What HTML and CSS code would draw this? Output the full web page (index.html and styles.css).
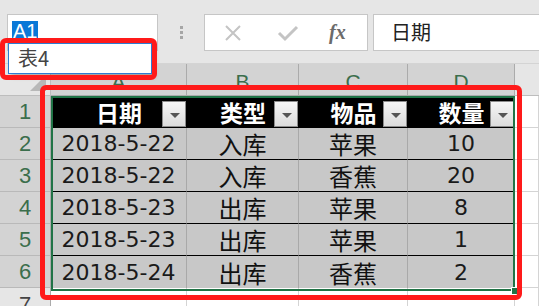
FILE: index.html
```html
<!DOCTYPE html>
<html>
<head>
<meta charset="utf-8">
<link rel="stylesheet" href="styles.css">
</head>
<body>
<div class="app">
  <div class="topbar">
    <div class="namebox"><span class="sel">A1</span></div>
    <div class="dots"><i></i><i></i><i></i></div>
    <div class="fbtns">
      <svg class="ico" width="20" height="20" viewBox="0 0 20 20"><path d="M3 3 L17 17 M17 3 L3 17" stroke="#c4c4c4" stroke-width="2" fill="none"/></svg>
      <svg class="ico" width="22" height="20" viewBox="0 0 22 20"><path d="M2 10 L8 16 L20 4" stroke="#c4c4c4" stroke-width="3" fill="none"/></svg>
      <span class="fx">fx</span>
    </div>
    <div class="finput">日期</div>
  </div>
  <div class="sheet">
    <div class="corner"></div>
    <div class="ch">A</div><div class="ch">B</div><div class="ch">C</div><div class="ch">D</div><div class="ch plain"></div>

    <div class="rh">1</div>
    <div class="th">日期<span class="fb"></span></div>
    <div class="th">类型<span class="fb"></span></div>
    <div class="th">物品<span class="fb"></span></div>
    <div class="th">数量<span class="fb"></span></div>
    <div class="c"></div>

    <div class="rh">2</div><div class="td num">2018-5-22</div><div class="td">入库</div><div class="td">苹果</div><div class="td num">10</div><div class="c"></div>
    <div class="rh">3</div><div class="td num">2018-5-22</div><div class="td">入库</div><div class="td">香蕉</div><div class="td num">20</div><div class="c"></div>
    <div class="rh">4</div><div class="td num">2018-5-23</div><div class="td">出库</div><div class="td">苹果</div><div class="td num">8</div><div class="c"></div>
    <div class="rh">5</div><div class="td num">2018-5-23</div><div class="td">出库</div><div class="td">苹果</div><div class="td num">1</div><div class="c"></div>
    <div class="rh">6</div><div class="td num last">2018-5-24</div><div class="td last">出库</div><div class="td last">香蕉</div><div class="td num last">2</div><div class="c"></div>
    <div class="rh plain">7</div><div class="c"></div><div class="c"></div><div class="c"></div><div class="c"></div><div class="c"></div>
  </div>

  <div class="tableframe"><span class="handle"></span></div>
  <div class="dropdown">表4</div>
  <div class="mark mark1"></div>
  <div class="mark mark2"></div>
</div>
</body>
</html>
```
FILE: styles.css
```css
* { box-sizing: border-box; }
html, body { margin: 0; padding: 0; }
body {
  width: 539px; height: 306px; overflow: hidden;
  background: #e6e6e6;
  font-family: "Noto Sans CJK SC", "Liberation Sans", sans-serif;
}
.app { position: relative; width: 539px; height: 306px; overflow: hidden; }

.topbar {
  height: 64px;
  display: flex;
  align-items: flex-start;
  padding-top: 14px;
  border-bottom: 1px solid #d4d4d4;
}
.namebox {
  margin-left: 7px;
  width: 151px; height: 37px;
  background: #fff;
  border: 1px solid #c6c6c6;
  padding: 4px 0 0 4px;
}
.sel {
  display: inline-block;
  background: #0a78d7; color: #fff;
  font-family: "Liberation Sans", sans-serif;
  font-size: 20px; line-height: 20px;
  padding: 0 1px;
}
.dots {
  width: 46px; height: 37px;
  display: flex; flex-direction: column; align-items: center; justify-content: center; gap: 2px;
}
.dots i { display: block; width: 3px; height: 3px; background: #a6a6a6; }
.fbtns {
  width: 164px; height: 37px;
  background: #fff; border: 1px solid #c6c6c6;
  display: flex; align-items: center;
  padding-left: 18px; gap: 34px;
}
.fx {
  font-family: "Liberation Serif", serif; font-style: italic; font-weight: bold;
  font-size: 20px; color: #6b6b6b; margin-left: -4px;
}
.finput {
  margin-left: 5px; flex: 1; height: 37px;
  background: #fff; border: 1px solid #c6c6c6; border-right: none;
  font-size: 20px; color: #222; line-height: 34px; padding-left: 17px;
}

.sheet {
  display: grid;
  grid-template-columns: 51px 136px 112px 109px 107px 24px;
  grid-template-rows: 32px repeat(6, 32px) 30px;
  background: #fff;
}
.corner {
  background: #e6e6e6; border-right: 1px solid #bdbdbd; border-bottom: 1px solid #bdbdbd;
  position: relative;
}
.corner::after {
  content: ""; position: absolute; right: 4px; bottom: 4px;
  border-left: 16px solid transparent; border-bottom: 16px solid #b8b8b8;
}
.ch {
  background: #d3d3d3; color: #3b6e4c;
  border-right: 1px solid #ababab; border-bottom: 1px solid #ababab;
  font-family: "Liberation Sans", sans-serif; font-size: 21px;
  display: flex; align-items: flex-end; justify-content: center; padding-bottom: 1px;
  line-height: 24px;
}
.ch.plain { background: #e6e6e6; border-right: none; border-bottom-color: #bdbdbd; }
.rh {
  background: #d3d3d3; color: #3b6e4c;
  border-right: 1px solid #ababab; border-bottom: 1px solid #b9b9b9;
  font-family: "Liberation Sans", sans-serif; font-size: 22px;
  display: flex; align-items: center; justify-content: center;
}
.rh.plain { background: #e6e6e6; color: #444; align-items: flex-start; padding-top: 4px; }
.c { background: #fff; border-right: 1px solid #d4d4d4; border-bottom: 1px solid #d4d4d4; }
.th {
  background: #000; color: #fff; font-weight: bold; font-size: 23px;
  position: relative;
  display: flex; align-items: center; justify-content: center;
  border-bottom: 1px solid #000;
}
.fb {
  position: absolute; right: 1px; top: 5px;
  width: 24px; height: 26px;
  background: linear-gradient(#f6f6f6, #dcdcdc);
  border: 1px solid #8c8c8c;
}
.fb::after {
  content: ""; position: absolute; left: 7px; top: 11px;
  border-left: 5px solid transparent; border-right: 5px solid transparent;
  border-top: 5px solid #555;
}
.td {
  background: #c8c8c8; color: #111; font-size: 24px;
  display: flex; align-items: center; justify-content: center;
  border-right: 1px solid #a9a9a9; border-bottom: 1px solid #000;
}
.td.num { font-family: "DejaVu Sans", "Noto Sans CJK SC", sans-serif; font-size: 22px; color: #1a1a1a; }
.td.last { border-bottom: none; }

.tableframe {
  position: absolute; left: 51px; top: 96px; width: 464px; height: 195px;
  border: 2px solid #217346;
}
.handle {
  position: absolute; right: -6px; bottom: -6px; width: 8px; height: 8px;
  background: #217346; border: 1px solid #fff;
}
.dropdown {
  position: absolute; left: 8px; top: 43px; width: 144px; height: 31px;
  background: #fff; border: 1px solid #2b7cd3;
  font-size: 20px; color: #444; line-height: 28px; padding-left: 9px;
  box-shadow: 3px 3px 4px rgba(0,0,0,0.25);
}
.mark {
  position: absolute; border: 5px solid #ff1a1a; border-radius: 6px;
}
.mark1 { left: 0; top: 38px; width: 157px; height: 42px; }
.mark2 { left: 40px; top: 85px; width: 482px; height: 215px; }
```
